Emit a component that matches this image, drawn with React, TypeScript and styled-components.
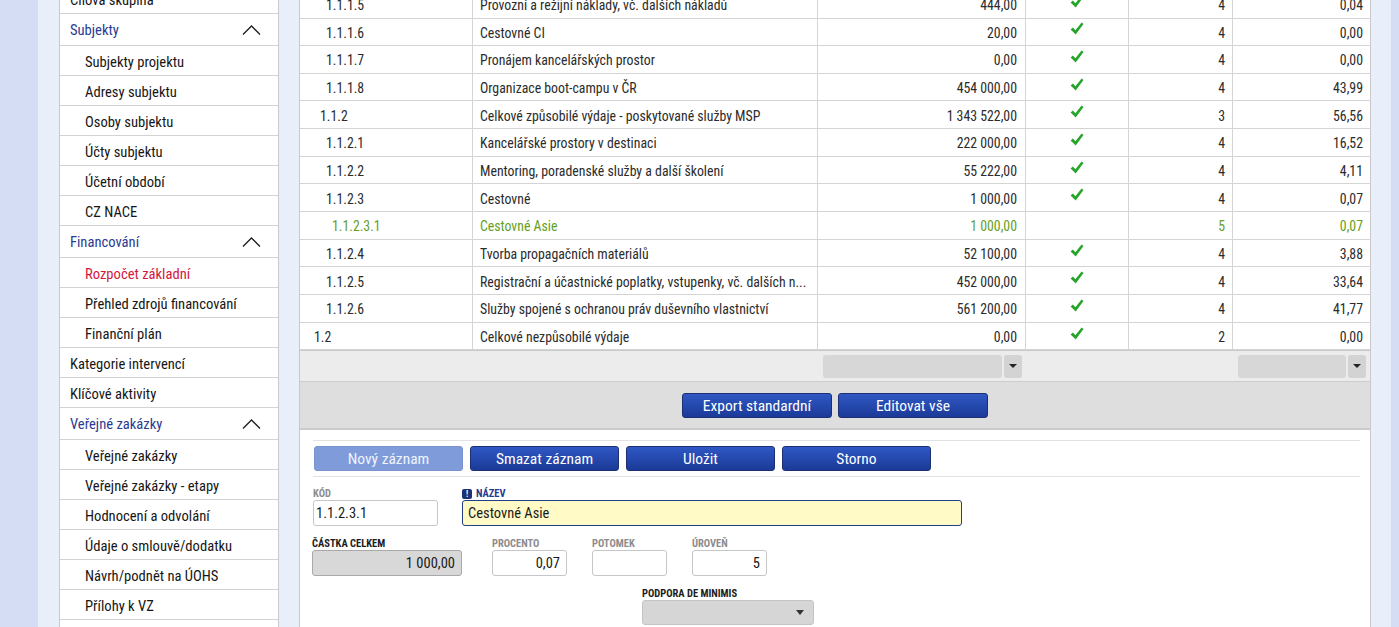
import styled, { createGlobalStyle } from 'styled-components';

const FONT = `"Roboto Condensed", "Liberation Sans Narrow", "Arial Narrow", "DejaVu Sans Condensed", Roboto, sans-serif`;

const GlobalStyle = createGlobalStyle`
  html, body {
    margin: 0;
    padding: 0;
  }
  body {
    font-family: ${FONT};
    background: #e9eefb;
    overflow: hidden;
  }
`;

const Page = styled.div`
  display: flex;
  align-items: flex-start;
  height: 627px;
  overflow: hidden;
  box-sizing: border-box;
  border-left: 38px solid #d5ddf5;
  border-right: 8px solid #d5ddf5;
  padding-left: 21px;
  gap: 20px;
  background: #e9eefb;
`;

/* ---------- sidebar ---------- */

const Sidebar = styled.nav`
  width: 220px;
  flex: none;
  margin-top: -16px;
  background: #fff;
  border-left: 1px solid #c9c9c9;
  border-right: 1px solid #c9c9c9;
  box-sizing: border-box;
`;

const NavItem = styled.div<{ $kind: 'top' | 'header' | 'sub'; $active?: boolean }>`
  display: flex;
  align-items: center;
  justify-content: space-between;
  box-sizing: border-box;
  height: ${({ $kind }) => ($kind === 'header' ? 32 : 30)}px;
  padding: ${({ $kind }) => ($kind === 'header' ? 0 : 2)}px 17px 0
    ${({ $kind }) => ($kind === 'sub' ? 25 : 10)}px;
  border-bottom: 1px solid #d3d3d3;
  font-size: 14.6px;
  white-space: nowrap;
  color: ${({ $kind, $active }) =>
    $active ? '#d4173c' : $kind === 'header' ? '#2b3a92' : '#161616'};
`;

const Chevron = styled.svg`
  width: 19px;
  height: 10px;
  display: block;
`;

type NavEntry = { label: string; kind: 'top' | 'header' | 'sub'; active?: boolean };

const nav: NavEntry[] = [
  { label: 'Cílová skupina', kind: 'top' },
  { label: 'Subjekty', kind: 'header' },
  { label: 'Subjekty projektu', kind: 'sub' },
  { label: 'Adresy subjektu', kind: 'sub' },
  { label: 'Osoby subjektu', kind: 'sub' },
  { label: 'Účty subjektu', kind: 'sub' },
  { label: 'Účetní období', kind: 'sub' },
  { label: 'CZ NACE', kind: 'sub' },
  { label: 'Financování', kind: 'header' },
  { label: 'Rozpočet základní', kind: 'sub', active: true },
  { label: 'Přehled zdrojů financování', kind: 'sub' },
  { label: 'Finanční plán', kind: 'sub' },
  { label: 'Kategorie intervencí', kind: 'top' },
  { label: 'Klíčové aktivity', kind: 'top' },
  { label: 'Veřejné zakázky', kind: 'header' },
  { label: 'Veřejné zakázky', kind: 'sub' },
  { label: 'Veřejné zakázky - etapy', kind: 'sub' },
  { label: 'Hodnocení a odvolání', kind: 'sub' },
  { label: 'Údaje o smlouvě/dodatku', kind: 'sub' },
  { label: 'Návrh/podnět na ÚOHS', kind: 'sub' },
  { label: 'Přílohy k VZ', kind: 'sub' },
  { label: '', kind: 'top' },
];

/* ---------- main panel ---------- */

const Main = styled.main`
  width: 1072px;
  flex: none;
  margin-top: -9.17px;
  min-height: 700px;
  background: #fff;
  border-left: 1px solid #c9c9c9;
  border-right: 1px solid #c9c9c9;
  box-sizing: border-box;
  display: flex;
  flex-direction: column;
`;

const COLS = '173px 345px 208px 103px 104px 137px';

const Row = styled.div<{ $selected?: boolean }>`
  display: grid;
  grid-template-columns: ${COLS};
  height: 27.67px;
  box-sizing: border-box;
  border-bottom: 1px solid #d4d4d4;
  font-size: 13.8px;
  color: ${({ $selected }) => ($selected ? '#64a01e' : '#2b2b2b')};
`;

const Cell = styled.div<{ $align?: 'left' | 'right' | 'center'; $pad?: number }>`
  display: flex;
  align-items: center;
  justify-content: ${({ $align }) =>
    $align === 'right' ? 'flex-end' : $align === 'center' ? 'center' : 'flex-start'};
  padding: 2px ${({ $align, $pad }) => ($align === 'right' ? $pad ?? 7 : 0)}px 0
    ${({ $align, $pad }) => ($align === 'left' ? $pad ?? 7 : 0)}px;
  border-right: 1px solid #d4d4d4;
  white-space: nowrap;
  overflow: hidden;
  &:last-child {
    border-right: none;
  }
`;

const CheckIcon = styled.svg`
  width: 14px;
  height: 13px;
  margin-top: -8px;
  display: block;
`;

const FilterBar = styled.div`
  display: grid;
  grid-template-columns: ${COLS};
  height: 32px;
  box-sizing: border-box;
  background: #ececec;
  border-top: 1px solid #c9c9c9;
  border-bottom: 1px solid #cdcdcd;
  align-items: center;
`;

const FilterSlot = styled.div<{ $col: number }>`
  grid-column: ${({ $col }) => $col};
  display: flex;
  gap: 2px;
  padding: 0 4px 0 5px;
`;

const FilterField = styled.div`
  flex: 1;
  height: 23px;
  border-radius: 3px;
  background: #d7d7d7;
`;

const FilterArrow = styled.div`
  width: 18px;
  height: 23px;
  border-radius: 3px;
  background: #d3d3d3;
  display: grid;
  place-items: center;
  &::after {
    content: '';
    border-left: 4px solid transparent;
    border-right: 4px solid transparent;
    border-top: 4px solid #222;
  }
`;

const Toolbar = styled.div`
  display: flex;
  justify-content: center;
  align-items: center;
  gap: 6px;
  height: 48px;
  padding-top: 1px;
  box-sizing: border-box;
  background: #dedede;
  border-bottom: 2px solid #cbcbcb;
`;

const Button = styled.button<{ $disabled?: boolean }>`
  width: 150px;
  height: 25px;
  padding: 0;
  border-radius: 3px;
  font-family: ${FONT};
  font-size: 15.5px;
  color: ${({ $disabled }) => ($disabled ? '#f0f4ff' : '#fff')};
  border: 1px solid ${({ $disabled }) => ($disabled ? '#7a93cf' : '#1b2f72')};
  background: ${({ $disabled }) =>
    $disabled ? '#7f9bd9' : 'linear-gradient(#2f58c4, #1b3a98)'};
  cursor: ${({ $disabled }) => ($disabled ? 'default' : 'pointer')};
`;

const FormArea = styled.section`
  padding: 10px 10px 0 13px;
`;

const ActionRow = styled.div`
  display: flex;
  gap: 7px;
  padding: 5px 0 5px 1px;
  border-top: 1px solid #e2e2e2;
  border-bottom: 1px solid #e2e2e2;
  button {
    width: 149px;
    height: 25px;
  }
`;

const FieldRow = styled.div<{ $top: number }>`
  display: flex;
  align-items: flex-end;
  margin-top: ${({ $top }) => $top}px;
`;

const Field = styled.div<{ $width: number; $ml?: number }>`
  width: ${({ $width }) => $width}px;
  margin-left: ${({ $ml }) => $ml ?? 0}px;
  display: flex;
  flex-direction: column;
`;

const Label = styled.label<{ $tone?: 'muted' | 'strong' | 'accent' }>`
  display: flex;
  align-items: center;
  gap: 4px;
  height: 13px;
  font-size: 10.5px;
  font-weight: 700;
  text-transform: uppercase;
  color: ${({ $tone }) =>
    $tone === 'strong' ? '#1c1c1c' : $tone === 'accent' ? '#1f3b8c' : '#8c8c8c'};
`;

const Required = styled.span`
  width: 10px;
  height: 10px;
  border-radius: 2px;
  background: #1f3175;
  color: #fff;
  font-size: 8.5px;
  line-height: 10px;
  text-align: center;
`;

const Input = styled.div<{ $variant?: 'plain' | 'focus' | 'readonly'; $right?: boolean; $pad?: number }>`
  height: 26px;
  box-sizing: border-box;
  display: flex;
  align-items: center;
  justify-content: ${({ $right }) => ($right ? 'flex-end' : 'flex-start')};
  padding: 0 ${({ $pad }) => $pad ?? 6}px;
  border-radius: 3px;
  font-size: 14.5px;
  color: #1a1a1a;
  border: 1px solid
    ${({ $variant }) =>
      $variant === 'focus' ? '#233f86' : $variant === 'readonly' ? '#a9a9a9' : '#c6c6c6'};
  background: ${({ $variant }) =>
    $variant === 'focus' ? '#fffac6' : $variant === 'readonly' ? '#d8d8d8' : '#fff'};
`;

const Select = styled.div`
  height: 25px;
  box-sizing: border-box;
  display: flex;
  align-items: center;
  justify-content: flex-end;
  padding-right: 9px;
  border-radius: 3px;
  border: 1px solid #c4c4c4;
  background: #d6d6d6;
  &::after {
    content: '';
    border-left: 4px solid transparent;
    border-right: 4px solid transparent;
    border-top: 5px solid #333;
  }
`;

type BudgetRow = {
  code: string;
  level: number;
  name: string;
  amount: string;
  check: boolean;
  depth: number;
  pct: string;
  selected?: boolean;
};

const rows: BudgetRow[] = [
  { code: '1.1.1.5', level: 4, name: 'Provozní a režijní náklady, vč. dalších nákladů', amount: '444,00', check: true, depth: 4, pct: '0,04' },
  { code: '1.1.1.6', level: 4, name: 'Cestovné CI', amount: '20,00', check: true, depth: 4, pct: '0,00' },
  { code: '1.1.1.7', level: 4, name: 'Pronájem kancelářských prostor', amount: '0,00', check: true, depth: 4, pct: '0,00' },
  { code: '1.1.1.8', level: 4, name: 'Organizace boot-campu v ČR', amount: '454 000,00', check: true, depth: 4, pct: '43,99' },
  { code: '1.1.2', level: 3, name: 'Celkové způsobilé výdaje - poskytované služby MSP', amount: '1 343 522,00', check: true, depth: 3, pct: '56,56' },
  { code: '1.1.2.1', level: 4, name: 'Kancelářské prostory v destinaci', amount: '222 000,00', check: true, depth: 4, pct: '16,52' },
  { code: '1.1.2.2', level: 4, name: 'Mentoring, poradenské služby a další školení', amount: '55 222,00', check: true, depth: 4, pct: '4,11' },
  { code: '1.1.2.3', level: 4, name: 'Cestovné', amount: '1 000,00', check: true, depth: 4, pct: '0,07' },
  { code: '1.1.2.3.1', level: 5, name: 'Cestovné Asie', amount: '1 000,00', check: false, depth: 5, pct: '0,07', selected: true },
  { code: '1.1.2.4', level: 4, name: 'Tvorba propagačních materiálů', amount: '52 100,00', check: true, depth: 4, pct: '3,88' },
  { code: '1.1.2.5', level: 4, name: 'Registrační a účastnické poplatky, vstupenky, vč. dalších n...', amount: '452 000,00', check: true, depth: 4, pct: '33,64' },
  { code: '1.1.2.6', level: 4, name: 'Služby spojené s ochranou práv duševního vlastnictví', amount: '561 200,00', check: true, depth: 4, pct: '41,77' },
  { code: '1.2', level: 2, name: 'Celkové nezpůsobilé výdaje', amount: '0,00', check: true, depth: 2, pct: '0,00' },
];

export default function App() {
  return (
    <>
      <GlobalStyle />
      <Page>
        <Sidebar>
          {nav.map((item, i) => (
            <NavItem key={i} $kind={item.kind} $active={item.active}>
              <span>{item.label}</span>
              {item.kind === 'header' && (
                <Chevron viewBox="0 0 19 10" aria-hidden="true">
                  <polyline points="1,9.5 9.5,1 18,9.5" fill="none" stroke="#1e1e1e" strokeWidth="1.3" />
                </Chevron>
              )}
            </NavItem>
          ))}
        </Sidebar>

        <Main>
          {rows.map((r) => (
            <Row key={r.code} $selected={r.selected}>
              <Cell $align="left" $pad={2 + r.level * 6}>{r.code}</Cell>
              <Cell $align="left" $pad={7}>{r.name}</Cell>
              <Cell $align="right" $pad={8}>{r.amount}</Cell>
              <Cell $align="center">
                {r.check && (
                  <CheckIcon viewBox="0 0 14 13" aria-hidden="true">
                    <path d="M0.6 7.4 L2.9 5.6 L5.4 8.3 L11.6 0.6 L13.5 2.1 L5.7 12.4 Z" fill="#27a52a" />
                  </CheckIcon>
                )}
              </Cell>
              <Cell $align="right" $pad={7}>{r.depth}</Cell>
              <Cell $align="right" $pad={7}>{r.pct}</Cell>
            </Row>
          ))}

          <FilterBar>
            <FilterSlot $col={3}>
              <FilterField />
              <FilterArrow />
            </FilterSlot>
            <FilterSlot $col={6}>
              <FilterField />
              <FilterArrow />
            </FilterSlot>
          </FilterBar>

          <Toolbar>
            <Button>Export standardní</Button>
            <Button>Editovat vše</Button>
          </Toolbar>

          <FormArea>
            <ActionRow>
              <Button $disabled>Nový záznam</Button>
              <Button>Smazat záznam</Button>
              <Button>Uložit</Button>
              <Button>Storno</Button>
            </ActionRow>

            <FieldRow $top={10}>
              <Field $width={125}>
                <Label>Kód</Label>
                <Input $pad={2}>1.1.2.3.1</Input>
              </Field>
              <Field $width={500} $ml={24}>
                <Label $tone="accent">
                  <Required>!</Required>
                  Název
                </Label>
                <Input $variant="focus" $pad={5}>Cestovné Asie</Input>
              </Field>
            </FieldRow>

            <FieldRow $top={11}>
              <Field $width={150} $ml={-1}>
                <Label $tone="strong">Částka celkem</Label>
                <Input $variant="readonly" $right>1 000,00</Input>
              </Field>
              <Field $width={75} $ml={30}>
                <Label>Procento</Label>
                <Input $right>0,07</Input>
              </Field>
              <Field $width={75} $ml={25}>
                <Label>Potomek</Label>
                <Input />
              </Field>
              <Field $width={75} $ml={25}>
                <Label>Úroveň</Label>
                <Input $right>5</Input>
              </Field>
            </FieldRow>

            <FieldRow $top={11}>
              <Field $width={172} $ml={329}>
                <Label $tone="strong">Podpora de minimis</Label>
                <Select />
              </Field>
            </FieldRow>
          </FormArea>
        </Main>
      </Page>
    </>
  );
}
